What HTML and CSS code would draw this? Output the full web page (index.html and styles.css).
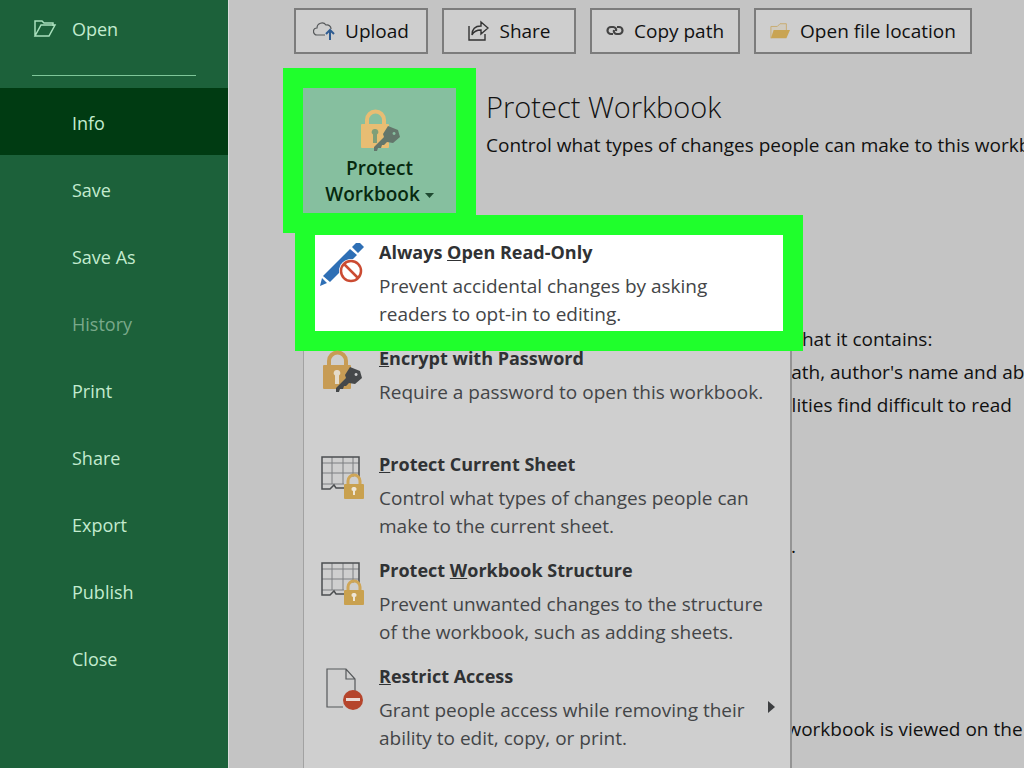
FILE: index.html
```html
<!DOCTYPE html>
<html lang="en">
<head>
    <meta charset="UTF-8">
    <meta name="viewport" content="width=device-width, initial-scale=1.0">
    <title>Info - Protect Workbook</title>
    <link rel="stylesheet" href="styles.css">
</head>
<body>

    <!-- shared icon shapes -->
    <svg class="symbols" aria-hidden="true">
        <symbol id="lock-key" viewBox="-2 0 44 44">
            <path class="lock-line" d="M7 18V12a8.500 8.500 0 0 1 17 0V18" fill="none" stroke-width="4"/>
            <rect class="lock-fill" x="1" y="16" width="28" height="24" rx="1"/>
            <path class="lock-hole" d="M15 21a3 3 0 0 1 2 5.500V35h-4V26.500A3 3 0 0 1 15 21z"/>
            <path class="key" d="M28 18L38 22L40 29L33 35L27 34L24 37L22 37L21 40L18 40L17 43L14 43V39L24 29L23 26ZM34 24a1.500 1.500 0 1 0 .1 0z" fill-rule="evenodd"/>
        </symbol>
        <symbol id="sheet-lock" viewBox="0 0 44 44">
            <path d="M2 8H39M2 18H39M2 29H24M12 2V29M23 2V29M33 2V22" fill="none" stroke="#7d7f81" stroke-width="1"/>
            <path d="M39 22V2H2V34H10L14 30L16 33H24" fill="none" stroke="#4c4f51" stroke-width="1.500"/>
            <path d="M28 30v-4a6 6 0 0 1 12 0v4" fill="none" stroke="#cfa657" stroke-width="3"/>
            <rect x="24" y="29" width="20" height="15" rx="1" fill="#c9a14f"/>
            <path d="M34 32a2 2 0 0 1 1 4v4h-2v-4a2 2 0 0 1 1-4z" fill="#eee6d6"/>
        </symbol>
    </svg>

    <nav class="sidebar">
        <a href="#" class="nav-item nav-open">
            <svg class="nav-icon" width="24" height="18" viewBox="0 0 24 18">
                <path d="M2 16V1H9L11 3H20V6M2 16L8 5H22L16 16Z" fill="none" stroke="#a9e0bd" stroke-width="1.500"/>
            </svg>
            Open
        </a>
        <hr class="nav-line">
        <a href="#" class="nav-item active">Info</a>
        <a href="#" class="nav-item">Save</a>
        <a href="#" class="nav-item">Save As</a>
        <a href="#" class="nav-item disabled">History</a>
        <a href="#" class="nav-item">Print</a>
        <a href="#" class="nav-item">Share</a>
        <a href="#" class="nav-item">Export</a>
        <a href="#" class="nav-item">Publish</a>
        <a href="#" class="nav-item">Close</a>
    </nav>

    <main class="content">
        <div class="toolbar">
            <button class="tool-button">
                <svg width="22" height="20" viewBox="0 0 22 20">
                    <path d="M12 14H4a3.500 3.500 0 0 1 0-7a5 5 0 0 1 9-3a4 4 0 0 1 5 4" fill="none" stroke="#55585a" stroke-width="1.200"/>
                    <path d="M17 19V10M13 13L17 9L21 13" fill="none" stroke="#2f5c91" stroke-width="2"/>
                </svg>
                Upload
            </button>
            <button class="tool-button">
                <svg width="22" height="22" viewBox="0 0 22 22">
                    <path d="M2 6V20H18V14" fill="none" stroke="#333" stroke-width="1.400"/>
                    <path d="M5 15C5 9 8 6 14 6V2L21 8L14 14V10C10 10 7 11 5 15Z" fill="none" stroke="#333" stroke-width="1.400"/>
                </svg>
                Share
            </button>
            <button class="tool-button">
                <svg width="18" height="12" viewBox="0 0 18 12">
                    <path d="M7 9H5a3.500 3.500 0 0 1 0-7H7a3 3 0 0 1 3 4M11 2H13a3.500 3.500 0 0 1 0 7H11a3 3 0 0 1-3-4" fill="none" stroke="#444" stroke-width="2.200"/>
                </svg>
                Copy path
            </button>
            <button class="tool-button">
                <svg width="20" height="18" viewBox="0 0 22 18">
                    <path d="M1 17V4H8L11 1H18V8" fill="#d0cbc0" stroke="#c8aa6c" stroke-width="1"/>
                    <path d="M4 8H22L18 17H1Z" fill="#c9a452"/>
                </svg>
                Open file location
            </button>
        </div>

        <section class="info-row">
            <div class="dropdown">
                <button class="protect-button">
                    <svg class="lock-light" width="44" height="44"><use href="#lock-key"/></svg>
                    <span>Protect<br>Workbook <svg class="caret" width="9" height="5" viewBox="0 0 9 5"><path d="M0 0H9L4.500 5Z" fill="#1f4a31"/></svg></span>
                </button>

                <div class="menu">
                    <button class="menu-item selected">
                        <svg class="menu-icon" width="44" height="46" viewBox="0 3 44 46">
                            <path d="M0 46L2 38L7 43Z M3 36L30 9L37 15L10 42Z M32 7L38 1L44 7L38 13Z" fill="#2e6fb5"/>
                            <circle cx="31" cy="31" r="12" fill="#fff"/>
                            <circle cx="31" cy="31" r="10" fill="none" stroke="#cb4b32" stroke-width="2.500"/>
                            <path d="M24 24L38 38" stroke="#cb4b32" stroke-width="2.500"/>
                        </svg>
                        <span class="menu-text">
                            <strong>Always <u>O</u>pen Read-Only</strong>
                            <span>Prevent accidental changes by asking<br>readers to opt-in to editing.</span>
                        </span>
                    </button>
                    <button class="menu-item">
                        <svg class="menu-icon lock-dark" width="44" height="44"><use href="#lock-key"/></svg>
                        <span class="menu-text">
                            <strong><u>E</u>ncrypt with Password</strong>
                            <span>Require a password to open this workbook.</span>
                        </span>
                    </button>
                    <button class="menu-item">
                        <svg class="menu-icon" width="44" height="44"><use href="#sheet-lock"/></svg>
                        <span class="menu-text">
                            <strong><u>P</u>rotect Current Sheet</strong>
                            <span>Control what types of changes people can<br>make to the current sheet.</span>
                        </span>
                    </button>
                    <button class="menu-item">
                        <svg class="menu-icon" width="44" height="44"><use href="#sheet-lock"/></svg>
                        <span class="menu-text">
                            <strong>Protect <u>W</u>orkbook Structure</strong>
                            <span>Prevent unwanted changes to the structure<br>of the workbook, such as adding sheets.</span>
                        </span>
                    </button>
                    <button class="menu-item">
                        <svg class="menu-icon" width="44" height="44" viewBox="0 0 44 44">
                            <path d="M23 40H7V2H26L35 12V24M26 2V12H35" fill="none" stroke="#55585a" stroke-width="1.200"/>
                            <circle cx="33" cy="33" r="10" fill="#b5452c"/>
                            <rect x="26" y="31" width="14" height="3" fill="#eadbd6"/>
                        </svg>
                        <span class="menu-text">
                            <strong><u>R</u>estrict Access</strong>
                            <span>Grant people access while removing their<br>ability to edit, copy, or print.</span>
                        </span>
                        <svg class="submenu-arrow" width="7" height="12" viewBox="0 0 7 12"><path d="M0 0L7 6L0 12Z" fill="#3d3f41"/></svg>
                    </button>
                </div>
            </div>
            <div class="info-text">
                <h2>Protect Workbook</h2>
                <p>Control what types of changes people can make to this workbook.</p>
            </div>
        </section>

        <section class="details inspect">
            <p>Before publishing this file, be aware that it contains:</p>
            <ul>
                <li>Document properties, printer path, author's name and absolute path</li>
                <li>Content that people with disabilities find difficult to read</li>
            </ul>
        </section>
        <section class="details versions">
            <p>There are no unsaved changes.</p>
        </section>
        <section class="details browser">
            <p>Pick what users can see when this workbook is viewed on the Web.</p>
        </section>
    </main>

</body>
</html>
```

FILE: styles.css
```css
* {
  box-sizing: border-box;
}
body {
  margin: 0;
  display: flex;
  height: 100vh;
  overflow: hidden;
  background-color: #c4c4c4;
  color: #111;
  font-family: "Open Sans", "Noto Sans", sans-serif;
  font-size: 19px;
  line-height: 28px;
}
button {
  font: inherit;
  color: inherit;
  cursor: pointer;
}
.symbols {
  position: absolute;
  width: 0;
  height: 0;
}

/* sidebar */
.sidebar {
  flex: 0 0 228px;
  background-color: #1c613a;
}
.nav-item {
  display: flex;
  align-items: center;
  height: 67px;
  padding: 2px 0 0 72px;
  color: #c3ebcf;
  font-size: 18px;
  text-decoration: none;
}
.nav-item.active {
  background-color: #003b12;
}
.nav-item.disabled {
  color: #79a98a;
}
.nav-open {
  height: 60px;
  padding: 0 0 2px 33px;
  gap: 15px;
}
.nav-line {
  height: 1px;
  margin: 15px 32px 12px;
  border: none;
  background-color: #7fc79a;
}

/* content */
.content {
  flex: 1;
  min-width: 0;
  padding: 8px 0 0 65px;
  border-left: 1px solid #dcdcdc;
  white-space: nowrap;
}
.toolbar {
  display: flex;
  gap: 14px;
}
.tool-button {
  display: flex;
  align-items: center;
  justify-content: center;
  gap: 10px;
  min-width: 134px;
  height: 46px;
  padding: 0 14px;
  border: 2px solid #7c7c7c;
  background-color: #cecece;
}
.info-row {
  display: flex;
  gap: 30px;
  margin: 34px 0 0 9px;
}
.dropdown {
  position: relative;
}
.protect-button {
  display: flex;
  flex-direction: column;
  align-items: center;
  justify-content: flex-end;
  gap: 3px;
  width: 153px;
  height: 125px;
  padding: 0 0 6px;
  border: none;
  background-color: #86bf9f;
  box-shadow: 0 0 0 20px #1fff2c;
  color: #06290f;
  font-weight: 600;
  line-height: 26px;
}
.caret {
  vertical-align: middle;
}
.lock-light {
  --lock: #e8bd73;
  --hole: #7f9f78;
  --key: #63766b;
}
.lock-dark {
  --lock: #c79c55;
  --hole: #e5dccb;
  --key: #45484a;
}
.lock-line {
  stroke: var(--lock);
}
.lock-fill {
  fill: var(--lock);
}
.lock-hole {
  fill: var(--hole);
}
.key {
  fill: var(--key);
}
.info-text h2 {
  margin: 0;
  font-size: 29px;
  font-weight: 300;
  line-height: 38px;
}
.info-text p {
  margin: 5px 0 0;
}

/* menu */
.menu {
  position: absolute;
  top: 142px;
  left: 0;
  display: flex;
  flex-direction: column;
  gap: 10px;
  width: 489px;
  padding: 4px 7px 20px 11px;
  border: 1px solid #a2a2a2;
  border-right: 2px solid #949494;
  background-color: #cfcfcf;
}
.menu-item {
  display: flex;
  align-items: flex-start;
  height: 96px;
  padding: 3px 8px 3px 5px;
  border: none;
  background: none;
  color: #434547;
  text-align: left;
}
.menu-item.selected {
  background-color: #fff;
  box-shadow: 0 0 0 20px #1fff2c;
}
.menu-icon {
  flex: none;
  margin: 5px 15px 0 0;
}
.menu-text {
  display: flex;
  flex: 1;
  flex-direction: column;
  gap: 6px;
}
.menu-text strong {
  color: #303234;
  font-size: 18px;
}
.submenu-arrow {
  align-self: center;
}

/* details behind the menu */
.details {
  padding-left: 180px;
}
.details p,
.details ul {
  margin: 0;
}
.details ul {
  padding: 3px 0 0 40px;
  line-height: 33px;
}
.inspect {
  margin-top: 112px;
}
.versions {
  margin-top: 110px;
}
.versions p {
  width: 322px;
  text-align: right;
}
.browser {
  margin-top: 155px;
  padding-left: 188px;
}
```
